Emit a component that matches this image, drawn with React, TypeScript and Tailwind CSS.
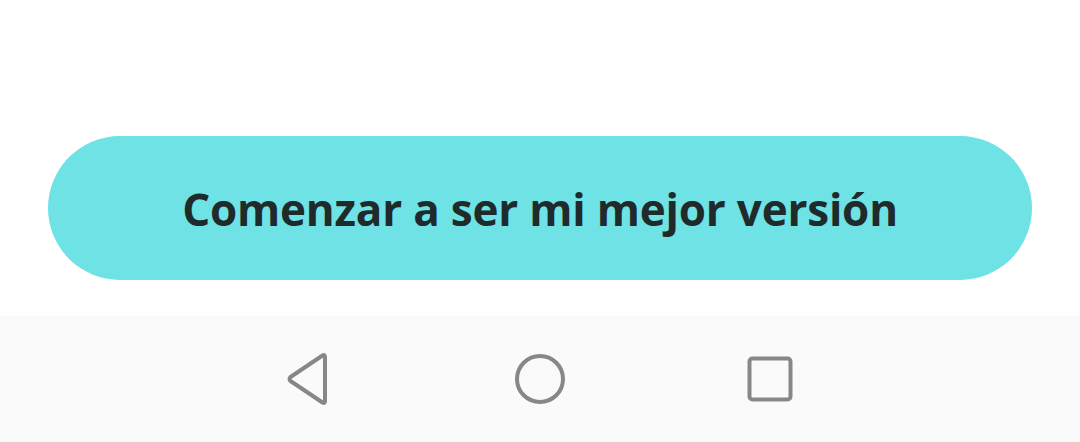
import React from "react";

export default function App() {
  return (
    <div className="w-[1080px] h-[442px] bg-white flex flex-col overflow-hidden">
      <div className="h-[136px]" />
      <div className="px-[48px]">
        <button className="w-full h-[144px] rounded-full bg-[#6ee2e4] flex items-center justify-center">
          <span
            className="text-[44px] font-bold text-[#1f2a2b] leading-none tracking-[-0.2px] pt-[2px]"
            style={{ fontFamily: "'Open Sans', Lato, sans-serif" }}
          >
            Comenzar a ser mi mejor versión
          </span>
        </button>
      </div>
      <div className="h-[36px]" />
      <div className="flex-1 bg-[#fafafa] flex items-center justify-center">
        <div className="w-[230px] flex justify-center">
          <svg width="46" height="54" viewBox="0 0 46 54">
            <path
              d="M38 5 L38 49 Q38 52 35.5 50.5 L3.5 29 Q1.5 27 3.5 25 L35.5 3.5 Q38 2 38 5 Z"
              fill="none"
              stroke="#878787"
              strokeWidth="4"
              strokeLinejoin="round"
            />
          </svg>
        </div>
        <div className="w-[230px] flex justify-center">
          <svg width="52" height="52" viewBox="0 0 52 52">
            <circle cx="26" cy="26" r="23" fill="none" stroke="#878787" strokeWidth="4" />
          </svg>
        </div>
        <div className="w-[230px] flex justify-center">
          <svg width="46" height="46" viewBox="0 0 46 46">
            <rect x="2.5" y="2.5" width="41" height="41" rx="3" fill="none" stroke="#878787" strokeWidth="4" />
          </svg>
        </div>
      </div>
    </div>
  );
}
